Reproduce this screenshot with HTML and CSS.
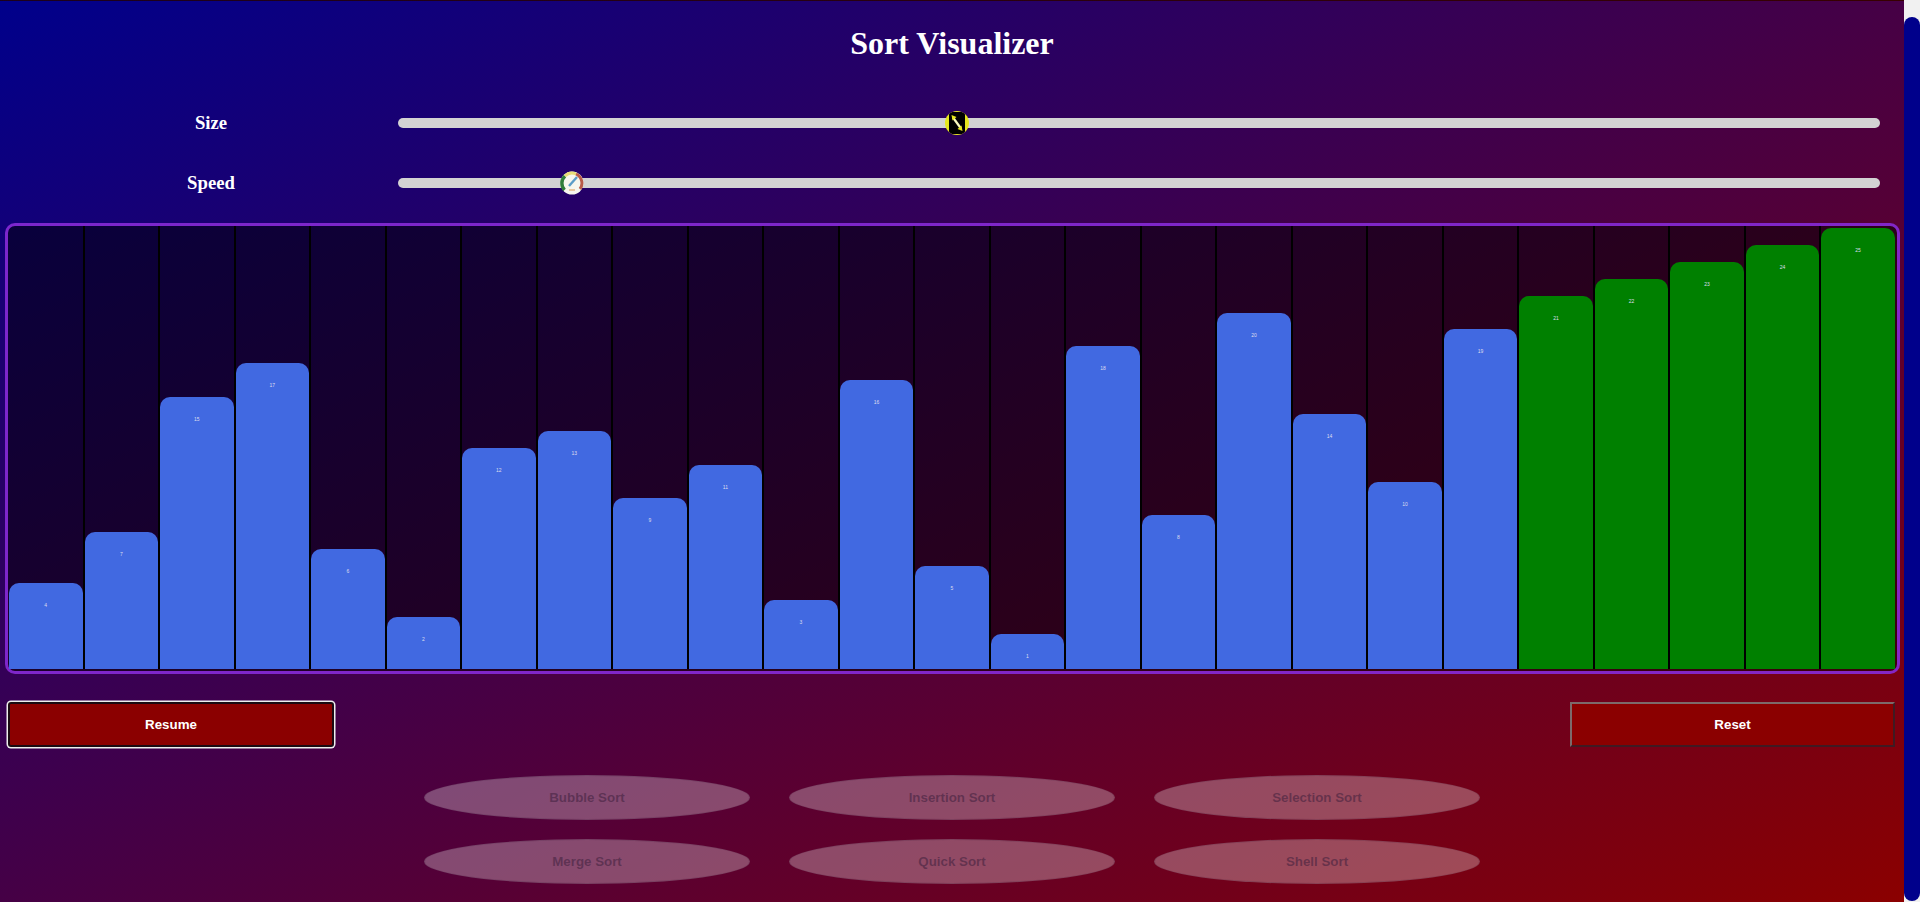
FILE: index.html
```html
<!DOCTYPE html>
<html lang="en">
<head>
    <meta charset="UTF-8">
    <meta name="viewport" content="width=device-width, initial-scale=1.0">
    <title>Sort Visualizer</title>
    <link rel="stylesheet" href="styles.css">
</head>
<body>
    <div class="page">
        <h1>Sort Visualizer</h1>

        <div class="control">
            <label class="control-label">Size</label>
            <div class="track">
                <svg class="thumb" style="left: 36.9%" viewBox="0 0 24 24">
                    <defs><clipPath id="sizeClip"><circle cx="12" cy="12" r="12"/></clipPath></defs>
                    <circle cx="12" cy="12" r="12" fill="#e6e61e"/>
                    <rect x="4" y="1" width="16" height="22" rx="3" fill="#000" clip-path="url(#sizeClip)"/>
                    <path d="M8 6.5 L16 17.5" stroke="#fbfbc0" stroke-width="2.2"/>
                    <path d="M6.5 4 L11.5 6 L7.5 9.5 Z M17.5 20 L12.5 18 L16.5 14.5 Z" fill="#e6e61e"/>
                </svg>
            </div>
        </div>

        <div class="control">
            <label class="control-label">Speed</label>
            <div class="track">
                <svg class="thumb" style="left: 10.9%" viewBox="0 0 24 24">
                    <circle cx="12" cy="12" r="11.5" fill="#f6f6ee"/>
                    <path d="M4.5 19 A10 10 0 0 1 5 5" fill="none" stroke="#2f7d3a" stroke-width="3.4"/>
                    <path d="M5 5 A10 10 0 0 1 16 3" fill="none" stroke="#e8dc78" stroke-width="3"/>
                    <path d="M16 3 A10 10 0 0 1 20 18" fill="none" stroke="#b85a48" stroke-width="3"/>
                    <path d="M9 15 L17 6" stroke="#5a9cc8" stroke-width="2.4"/>
                    <path d="M9 19 H15" stroke="#e8c8a0" stroke-width="2"/>
                </svg>
            </div>
        </div>

        <div class="bars">
            <div class="col"><div class="bar" style="height: 86px">4</div></div>
            <div class="col"><div class="bar" style="height: 137px">7</div></div>
            <div class="col"><div class="bar" style="height: 272px">15</div></div>
            <div class="col"><div class="bar" style="height: 306px">17</div></div>
            <div class="col"><div class="bar" style="height: 120px">6</div></div>
            <div class="col"><div class="bar" style="height: 52px">2</div></div>
            <div class="col"><div class="bar" style="height: 221px">12</div></div>
            <div class="col"><div class="bar" style="height: 238px">13</div></div>
            <div class="col"><div class="bar" style="height: 171px">9</div></div>
            <div class="col"><div class="bar" style="height: 204px">11</div></div>
            <div class="col"><div class="bar" style="height: 69px">3</div></div>
            <div class="col"><div class="bar" style="height: 289px">16</div></div>
            <div class="col"><div class="bar" style="height: 103px">5</div></div>
            <div class="col"><div class="bar" style="height: 35px">1</div></div>
            <div class="col"><div class="bar" style="height: 323px">18</div></div>
            <div class="col"><div class="bar" style="height: 154px">8</div></div>
            <div class="col"><div class="bar" style="height: 356px">20</div></div>
            <div class="col"><div class="bar" style="height: 255px">14</div></div>
            <div class="col"><div class="bar" style="height: 187px">10</div></div>
            <div class="col"><div class="bar" style="height: 340px">19</div></div>
            <div class="col"><div class="bar sorted" style="height: 373px">21</div></div>
            <div class="col"><div class="bar sorted" style="height: 390px">22</div></div>
            <div class="col"><div class="bar sorted" style="height: 407px">23</div></div>
            <div class="col"><div class="bar sorted" style="height: 424px">24</div></div>
            <div class="col"><div class="bar sorted" style="height: 441px">25</div></div>
        </div>

        <div class="actions">
            <button class="btn btn-focus">Resume</button>
            <button class="btn">Reset</button>
        </div>

        <div class="algos">
            <button class="algo" disabled>Bubble Sort</button>
            <button class="algo" disabled>Insertion Sort</button>
            <button class="algo" disabled>Selection Sort</button>
            <button class="algo" disabled>Merge Sort</button>
            <button class="algo" disabled>Quick Sort</button>
            <button class="algo" disabled>Shell Sort</button>
        </div>
    </div>

    <div class="scrollbar"><div class="scrollbar-thumb"></div></div>
</body>
</html>
```

FILE: styles.css
```css
html, body {
    margin: 0;
    height: 100%;
    overflow: hidden;
}
body {
    display: flex;
}
.page {
    flex: 1;
    min-width: 0;
    box-sizing: border-box;
    border-top: 1px solid rgba(0, 0, 0, 0.6);
    background: linear-gradient(to bottom right, #00008b, #8b0000);
}
h1 {
    margin: 24px 0 49px;
    font: bold 32px/37px "Liberation Serif", serif;
    color: white;
    text-align: center;
}
.control {
    display: flex;
    align-items: center;
    height: 24px;
    padding: 0 24px;
    margin-bottom: 36px;
}
.control-label {
    width: 374px;
    font: bold 18.72px "Liberation Serif", serif;
    color: white;
    text-align: center;
}
.track {
    position: relative;
    flex: 1;
    height: 10px;
    border-radius: 5px;
    background-color: #d3d3d3;
}
.thumb {
    position: absolute;
    top: -7px;
    width: 24px;
    height: 24px;
}
.bars {
    display: flex;
    align-items: flex-end;
    box-sizing: border-box;
    height: 451px;
    margin: -8px 4px 0 5px;
    padding: 0 2px 2px 1px;
    border: 3px solid rgba(145, 45, 230, 0.85);
    border-radius: 10px;
    background-color: rgba(0, 0, 0, 0.5);
}
.col {
    flex: 1;
    min-width: 0;
    height: 100%;
    display: flex;
    align-items: flex-end;
    border-right: 2px solid black;
}
.col:last-child {
    border-right: none;
}
.bar {
    width: 100%;
    box-sizing: border-box;
    padding-top: 19px;
    border-radius: 10px 10px 0 0;
    background-color: #4169e1;
    color: #dde;
    font: 5px "Liberation Sans", sans-serif;
    text-align: center;
}
.bar.sorted {
    background-color: green;
}
.actions {
    display: flex;
    justify-content: space-between;
    padding: 0 9px 0 8px;
    margin-top: 28px;
}
.btn, .algo {
    width: 326px;
    height: 45px;
    font: bold 13.33px "Liberation Sans", sans-serif;
}
.btn {
    width: 325px;
    border: 2px solid;
    border-color: #7d6a6a #3f1a22 #3f1a22 #7d6a6a;
    background-color: #8b0000;
    color: white;
}
.btn-focus {
    width: 326px;
    border-color: #1a0a12;
    border-radius: 3px;
    box-shadow: 0 0 0 1.5px #eee;
}
.algos {
    display: grid;
    grid-template-columns: repeat(3, 326px);
    justify-content: center;
    column-gap: 39px;
    row-gap: 19px;
    margin-top: 28px;
}
.algo {
    border: 1px solid rgba(60, 30, 60, 0.2);
    border-radius: 50%;
    background-color: rgba(255, 255, 255, 0.29);
    color: rgba(60, 30, 60, 0.55);
}
.scrollbar {
    width: 16px;
    flex: none;
    box-sizing: border-box;
    padding: 17px 0 1px;
    background-color: #f1f1f1;
}
.scrollbar-thumb {
    height: 100%;
    border-radius: 8px;
    background-color: #00008b;
}
```
